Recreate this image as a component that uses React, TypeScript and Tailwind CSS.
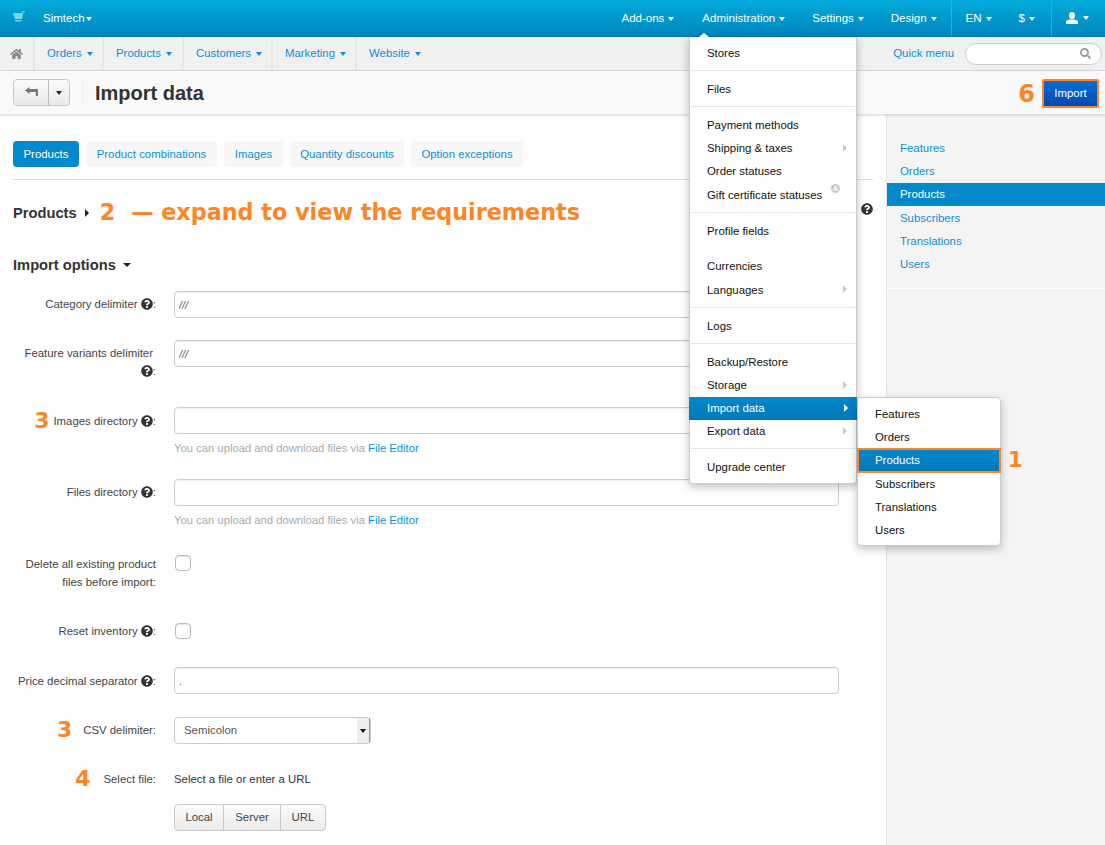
import React from "react";
import { FaHome, FaSearch, FaQuestionCircle } from "react-icons/fa";

const Caret = ({ className = "border-t-white" }: { className?: string }) => (
  <span className={`inline-block w-0 h-0 border-x-[3.5px] border-x-transparent border-t-[4px] align-middle ${className}`} />
);

const Help = () => <FaQuestionCircle className="inline-block text-[#333] w-[12px] h-[12px] align-[-2px]" />;

const Big = ({ children, className }: { children: React.ReactNode; className: string }) => (
  <span className={`inline-block h-[18px] leading-[18px] align-top text-[#ff8426] text-[22px] font-bold font-['DejaVu_Sans',sans-serif] ${className}`}>{children}</span>
);

const TopItem = ({ label, className = "" }: { label: React.ReactNode; className?: string }) => (
  <div className={`flex items-center gap-[4px] text-white ${className}`}>
    <span>{label}</span>
    <Caret />
  </div>
);

const NavItem = ({ label, w, last }: { label: string; w: string; last?: boolean }) => (
  <div className={`flex items-center gap-[5px] h-full pl-[12px] text-[#0d8fd6] ${w} ${last ? "" : "border-r-2 border-r-[#e6e6e6]"}`}>
    <span>{label}</span>
    <Caret className="border-t-[#0d8fd6]" />
  </div>
);

const Tab = ({ label, active, w }: { label: string; active?: boolean; w: string }) => (
  <div className={`h-[26px] pt-px rounded-[4px] flex items-center justify-center ${w} ${active ? "bg-[#0388cc] text-white" : "bg-[#f7f7f7] text-[#0d8fd6]"}`}>{label}</div>
);

const Row = ({ label, labelClass = "pt-[4px]", className, children }: { label: React.ReactNode; labelClass?: string; className: string; children: React.ReactNode }) => (
  <div className={`flex items-start ${className}`}>
    <div className={`w-[143px] text-right text-[#444] leading-[18px] ${labelClass}`}>{label}</div>
    <div className="ml-[18px] w-[665px]">{children}</div>
  </div>
);

const TextInput = ({ value = "", italic }: { value?: string; italic?: boolean }) => (
  <input
    readOnly
    value={value}
    className={`block w-full h-[27px] px-[4px] bg-white border border-[#ccc] rounded-[4px] text-[11px] text-[#555] outline-none shadow-[inset_0_1px_1px_rgba(0,0,0,0.07)] ${italic ? "italic" : ""}`}
  />
);

const HelpText = () => (
  <div className="mt-[5px] h-[18px] leading-[18px] text-[11.25px] text-[#aaa]">
    You can upload and download files via <span className="text-[#0d8fd6]">File Editor</span>
  </div>
);

const Check = () => <div className="w-[16px] h-[16px] ml-[1px] rounded-[4px] border border-[#bbb] bg-white shadow-[inset_0_1px_1px_rgba(0,0,0,0.1)]" />;

const MenuItem = ({ label, arrow, h = "h-[23px]", textClass = "", children }: { label: string; arrow?: boolean; h?: string; textClass?: string; children?: React.ReactNode }) => (
  <div className={`relative flex items-center pl-[17px] text-[#111] ${h}`}>
    <span className={textClass}>{label}</span>
    {children}
    {arrow && <span className="absolute right-[9px] top-[7px] w-0 h-0 border-y-[4px] border-y-transparent border-l-[4px] border-l-[#ccc]" />}
  </div>
);

const Sep = () => <div className="h-px bg-[#e5e5e5] mx-px mt-[5px] mb-[7px]" />;

const SideItem = ({ label, active, h = "h-[23px]" }: { label: string; active?: boolean; h?: string }) => (
  <div className={`flex items-center pl-[13px] ${h} ${active ? "bg-[#0388cc] text-white" : "text-[#0d8fd6]"}`}>{label}</div>
);

export default function App() {
  return (
    <div className="relative w-[1105px] h-[845px] overflow-hidden bg-white font-['Liberation_Sans',Arial,sans-serif] text-[11.4px] text-[#333]">
      {/* Top bar */}
      <header className="h-[37px] pt-px flex items-center bg-gradient-to-b from-[#02abda] to-[#0086bd] border-b border-[#0078a8] text-[11.5px]">
        <svg viewBox="0 0 12 11" className="ml-[13px] mb-[4px] w-[12px] h-[11px]" fill="#7ed2ea">
          <path d="M0 2 L9.2 2 L9.8 0 L12 0 L12 1 L10.6 1 L9 8 L2 8 Z" />
          <rect x="2" y="9" width="6.5" height="1.5" />
        </svg>
        <div className="ml-[18px] flex items-center gap-[1px] text-white">
          <span>Simtech</span>
          <Caret />
        </div>
        <div className="ml-auto flex items-center h-full -mt-px">
          <TopItem label="Add-ons" className="pt-px pr-[28px]" />
          <TopItem label="Administration" className="pt-px pr-[27px]" />
          <TopItem label="Settings" className="pt-px pr-[27px]" />
          <TopItem label="Design" className="pt-px pr-[14px]" />
          <div className="h-full flex items-center border-x border-[#38a9d3] mr-[14px]">
            <TopItem label="EN" className="pt-px pl-[14px] pr-[27px]" />
            <TopItem label="$" className="pt-px pr-[16px]" />
          </div>
          <div className="flex items-center gap-[5px] pr-[16px] text-white">
            <svg viewBox="0 0 12 12" className="w-[12px] h-[12px]" fill="#fff">
              <ellipse cx="6" cy="3.5" rx="3" ry="3.5" />
              <path d="M0 12 L0 9.6 Q0 8.2 4 7.5 L8 7.5 Q12 8.2 12 9.6 L12 12 Z" />
            </svg>
            <Caret />
          </div>
        </div>
      </header>

      {/* Secondary nav */}
      <nav className="h-[34px] flex items-center bg-[#f0f0f0] border-b border-[#ddd]">
        <div className="w-[35px] h-full flex items-center justify-center border-r-2 border-r-[#e6e6e6]">
          <FaHome className="w-[13px] h-[12px] text-[#888]" />
        </div>
        <NavItem label="Orders" w="w-[69px]" />
        <NavItem label="Products" w="w-[80px]" />
        <NavItem label="Customers" w="w-[89px]" />
        <NavItem label="Marketing" w="w-[84px]" />
        <NavItem label="Website" w="w-[80px]" last />
        <span className="ml-auto text-[#0d8fd6]">Quick menu</span>
        <div className="ml-[11px] mr-[3px] w-[137px] h-[22px] rounded-full bg-white border border-[#ccc] flex items-center justify-end pr-[10px]">
          <FaSearch className="w-[11px] h-[11px] text-[#999]" />
        </div>
      </nav>

      {/* Toolbar */}
      <div className="relative z-10 h-[43px] flex items-center bg-[#f9f9f9] shadow-[0_1px_3px_rgba(0,0,0,0.2)]">
        <div className="ml-[13px] flex h-[27px] rounded-[4px] border border-[#c8c8c8] bg-gradient-to-b from-[#fbfbfb] to-[#eaeaea]">
          <div className="w-[35px] flex items-center justify-center border-r border-[#bbb]">
            <svg viewBox="0 0 13 9" className="w-[13px] h-[9px] mb-[3px]" fill="#777">
              <path d="M0 3.5 L4.5 0 L4.5 2 L13 2 L13 9 L10.8 9 L10.8 5 L4.5 5 L4.5 7 Z" />
            </svg>
          </div>
          <div className="w-[20px] flex items-center justify-center">
            <Caret className="border-t-[#222]" />
          </div>
        </div>
        <div className="ml-[13px] w-px h-[28px] bg-[#eee]" />
        <h1 className="ml-[11px] text-[20px] font-bold text-[#333]">Import data</h1>
        <Big className="ml-auto mt-[2px] !text-[24px] !leading-[26px] !h-[26px]">6</Big>
        <div className="ml-[7px] mr-[6px] mt-px pt-px w-[57px] h-[29px] border-2 border-[#ff8426] rounded-[2px] bg-gradient-to-b from-[#0a6fd0] to-[#0448b0] flex items-center justify-center text-white">
          Import
        </div>
      </div>

      {/* Body */}
      <div className="flex h-[731px]">
        <main className="w-[886px] pl-[13px] pr-[13px]">
          <div className="mt-[27px] flex gap-[7px]">
            <Tab label="Products" active w="w-[66px]" />
            <Tab label="Product combinations" w="w-[131px]" />
            <Tab label="Images" w="w-[59px]" />
            <Tab label="Quantity discounts" w="w-[114px]" />
            <Tab label="Option exceptions" w="w-[112px]" />
          </div>
          <div className="mt-[12px] h-px bg-[#ddd]" />
          <div className="mt-[22px] pt-[2px] h-[20px] flex items-center">
            <span className="text-[14.7px] font-bold text-[#333]">Products</span>
            <span className="ml-[8px] w-0 h-0 border-y-[4px] border-y-transparent border-l-[4px] border-l-[#222]" />
            <span className="ml-[11px] text-[#ff8426] text-[22.3px] font-bold font-['DejaVu_Sans',sans-serif]">2</span>
            <span className="ml-[16px] text-[#ff8426] text-[22.3px] font-bold font-['DejaVu_Sans',sans-serif]">— expand to view the requirements</span>
            <span className="ml-auto mb-[6px]"><Help /></span>
          </div>
          <div className="mt-[33px] h-[20px] flex items-center gap-[7px]">
            <span className="text-[14.7px] font-bold text-[#333]">Import options</span>
            <Caret className="border-t-[#222] !border-x-[4px]" />
          </div>

          <Row className="mt-[16px]" label={<>Category delimiter <Help />:</>}>
            <TextInput value="///" italic />
          </Row>
          <Row className="mt-[22px]" label={<><span className="pr-[3px]">Feature variants delimiter</span> <Help />:</>}>
            <TextInput value="///" italic />
          </Row>
          <Row className="mt-[27px]" labelClass="pt-[5px]" label={<><Big className="mr-[4px]">3</Big>Images directory <Help />:</>}>
            <TextInput />
            <HelpText />
          </Row>
          <Row className="mt-[22px]" label={<>Files directory <Help />:</>}>
            <TextInput />
            <HelpText />
          </Row>
          <Row className="mt-[26px]" labelClass="pt-0" label="Delete all existing product files before import:">
            <Check />
          </Row>
          <Row className="mt-[32px]" labelClass="-mt-[1px]" label={<>Reset inventory <Help />:</>}>
            <Check />
          </Row>
          <Row className="mt-[27px]" labelClass="pt-[5px]" label={<>Price decimal separator <Help />:</>}>
            <TextInput value="." />
          </Row>
          <Row className="mt-[23px]" label={<><Big className="mr-[11px]">3</Big>CSV delimiter:</>}>
            <div className="w-[197px] h-[27px] flex items-stretch rounded-[4px] border border-[#ccc] bg-white">
              <span className="flex-1 flex items-center pl-[9px] text-[#555]">Semicolon</span>
              <span className="w-[13px] flex items-center justify-center bg-[#eee] border-r border-r-[#999]">
                <Caret className="border-t-[#111]" />
              </span>
            </div>
          </Row>
          <Row className="mt-[26px]" labelClass="pt-0" label={<><Big className="mr-[13px]">4</Big>Select file:</>}>
            <div className="leading-[18px] text-[#333]">Select a file or enter a URL</div>
            <div className="mt-[16px] inline-flex h-[27px] rounded-[4px] border border-[#c8c8c8] bg-gradient-to-b from-[#fbfbfb] to-[#ebebeb] text-[#444]">
              <span className="w-[49px] flex items-center justify-center border-r border-[#c8c8c8]">Local</span>
              <span className="w-[57px] flex items-center justify-center border-r border-[#c8c8c8]">Server</span>
              <span className="w-[44px] flex items-center justify-center">URL</span>
            </div>
          </Row>
        </main>

        <aside className="flex-1 bg-[#f4f4f4] border-l border-[#e4e4e4] pt-[23px]">
          <SideItem label="Features" />
          <SideItem label="Orders" />
          <SideItem label="Products" active />
          <SideItem label="Subscribers" h="h-[24px] pt-[1px]" />
          <SideItem label="Translations" />
          <SideItem label="Users" />
          <div className="mt-[12px] h-px bg-white" />
        </aside>
      </div>

      {/* Administration dropdown */}
      <span className="absolute z-30 left-[699px] top-[33px] w-0 h-0 border-x-[5px] border-x-transparent border-b-[4px] border-b-white" />
      <div className="absolute z-20 left-[689px] top-[37px] w-[168px] h-[447px] bg-white rounded-b-[3px] border-x border-b border-[#ccc] shadow-[0_3px_8px_rgba(0,0,0,0.25)] pt-[5px]">
        <MenuItem label="Stores" />
        <Sep />
        <MenuItem label="Files" />
        <Sep />
        <MenuItem label="Payment methods" />
        <MenuItem label="Shipping & taxes" arrow />
        <MenuItem label="Order statuses" />
        <MenuItem label="Gift certificate statuses" h="h-[24px]" textClass="pt-[1px]">
          <span className="absolute left-[141px] top-[1px] w-[9px] h-[9px] rounded-full bg-[#ccc] text-white text-[7px] leading-[9px] text-center font-bold">A</span>
        </MenuItem>
        <Sep />
        <MenuItem label="Profile fields" />
        <div className="h-[12px]" />
        <MenuItem label="Currencies" />
        <MenuItem label="Languages" arrow h="h-[24px]" textClass="pt-[1px]" />
        <Sep />
        <MenuItem label="Logs" />
        <Sep />
        <MenuItem label="Backup/Restore" />
        <MenuItem label="Storage" arrow />
        <div className="relative flex items-center h-[23px] pl-[17px] -mx-px text-white bg-gradient-to-b from-[#0388cc] to-[#0378b8]">
          <span className="pl-px">Import data</span>
          <span className="absolute right-[9px] top-[7px] w-0 h-0 border-y-[4px] border-y-transparent border-l-[4px] border-l-white" />
        </div>
        <MenuItem label="Export data" arrow />
        <Sep />
        <MenuItem label="Upgrade center" />
      </div>

      {/* Import data submenu */}
      <div className="absolute z-20 left-[857px] top-[397px] w-[144px] h-[149px] bg-white rounded-[4px] border border-[#ccc] shadow-[0_3px_8px_rgba(0,0,0,0.25)] pt-[5px] text-[#111]">
        <div className="h-[23px] flex items-center pl-[17px]">Features</div>
        <div className="h-[23px] flex items-center pl-[17px]">Orders</div>
        <div className="-ml-px -mt-px w-[144px] h-[25px] flex items-center pl-[16px] text-white border-2 border-[#ff8426] bg-gradient-to-b from-[#0388cc] to-[#0378b8]">Products</div>
        <div className="h-[23px] flex items-center pl-[17px]">Subscribers</div>
        <div className="h-[23px] flex items-center pl-[17px]">Translations</div>
        <div className="h-[23px] flex items-center pl-[17px]">Users</div>
      </div>
      <span className="absolute z-20 left-[1008px] top-[446px] text-[#ff8426] text-[21px] leading-[28px] font-bold font-['DejaVu_Sans',sans-serif]">1</span>
    </div>
  );
}
